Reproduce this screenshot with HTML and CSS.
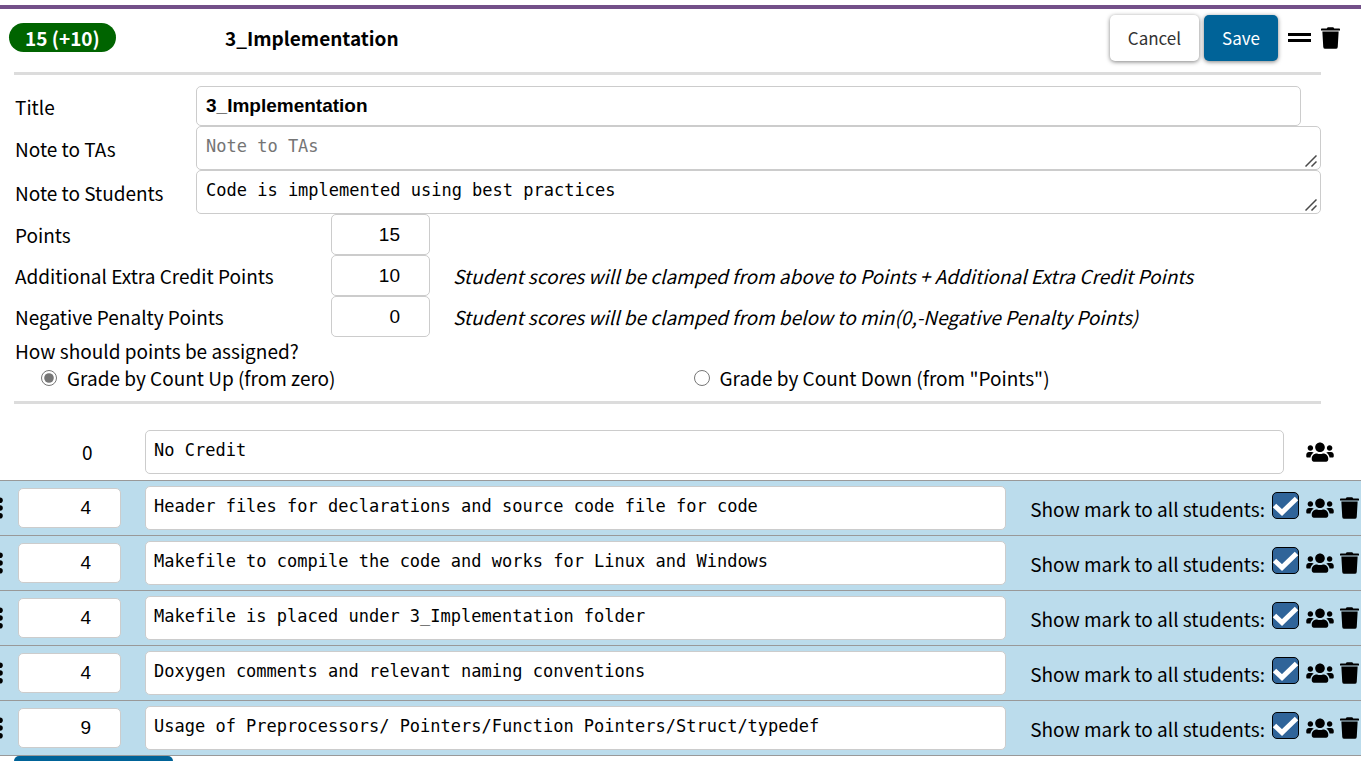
FILE: index.html
```html
<!DOCTYPE html>
<html lang="en">
<head>
<meta charset="utf-8">
<title>3_Implementation</title>
<link rel="stylesheet" href="styles.css">
</head>
<body>
<svg class="sprite" aria-hidden="true">
  <symbol id="trash" viewBox="0 0 448 512"><path d="M432 32H312l-9.400-18.700A24 24 0 0 0 281.100 0H166.800a23.720 23.720 0 0 0-21.400 13.300L136 32H16A16 16 0 0 0 0 48v32h448V48a16 16 0 0 0-16-16zM53.200 467a48 48 0 0 0 47.900 45h245.800a48 48 0 0 0 47.900-45L416 104H32z"/></symbol>
  <symbol id="users" viewBox="0 0 640 512"><path d="M96 224c35.3 0 64-28.7 64-64s-28.7-64-64-64-64 28.7-64 64 28.7 64 64 64zm448 0c35.3 0 64-28.7 64-64s-28.7-64-64-64-64 28.7-64 64 28.7 64 64 64zm32 32h-64c-17.6 0-33.5 7.1-45.1 18.6 40.3 22.1 68.9 62 75.1 109.4h66c17.7 0 32-14.3 32-32v-32c0-35.3-28.7-64-64-64zm-256 0c61.9 0 112-50.1 112-112S381.9 32 320 32 208 82.1 208 144s50.1 112 112 112zm76.8 32h-8.3c-20.8 10-43.9 16-68.5 16s-47.6-6-68.5-16h-8.3C179.6 288 128 339.6 128 403.2V432c0 26.5 21.5 48 48 48h288c26.5 0 48-21.5 48-48v-28.8c0-63.6-51.6-115.2-115.2-115.2zm-223.7-13.4C161.5 263.1 145.6 256 128 256H64c-35.3 0-64 28.7-64 64v32c0 17.7 14.3 32 32 32h65.9c6.3-47.4 34.9-87.3 75.2-109.4z"/></symbol>
  <symbol id="dots" viewBox="0 0 3 22"><circle cx="0" cy="3.2" r="2.8"/><circle cx="0" cy="11" r="2.8"/><circle cx="0" cy="18.8" r="2.8"/></symbol>
  <symbol id="grip" viewBox="0 0 12 12"><path d="M0.5 11.5L11.5 0.5M6.5 11.5L11.5 6.5" fill="none" stroke="#4a4a4a" stroke-width="1.5"/></symbol>
  <symbol id="tick" viewBox="0 0 27 27"><path d="M2.5 13.500L10 20.500L24.500 6.500" fill="none" stroke="#fff" stroke-width="5"/></symbol>
</svg>
<main class="component">
  <header class="head">
    <div class="badge-cell"><span class="badge">15 (+10)</span></div>
    <h1 class="title">3_Implementation</h1>
    <div class="actions">
      <button class="btn" type="button">Cancel</button>
      <button class="btn btn-primary" type="button">Save</button>
      <button class="icon-btn" type="button" aria-label="Reorder"><svg class="lines" viewBox="0 0 23 9"><path d="M0 0h23v3H0zM0 6h23v3H0z"/></svg></button>
      <button class="icon-btn" type="button" aria-label="Delete component"><svg class="trash"><use href="#trash"/></svg></button>
    </div>
  </header>

  <section class="settings">
    <div class="field field-title">
      <label for="title">Title</label>
      <input class="box title-input" id="title" type="text" value="3_Implementation">
    </div>
    <div class="field">
      <label for="note-ta">Note to TAs</label>
      <div class="area"><textarea class="box" id="note-ta" placeholder="Note to TAs"></textarea><svg class="resize"><use href="#grip"/></svg></div>
    </div>
    <div class="field">
      <label for="note-st">Note to Students</label>
      <div class="area"><textarea class="box" id="note-st">Code is implemented using best practices</textarea><svg class="resize"><use href="#grip"/></svg></div>
    </div>
    <div class="points">
      <label for="points">Points</label>
      <input class="box number" id="points" type="number" value="15">
      <span></span>
      <label for="extra">Additional Extra Credit Points</label>
      <input class="box number" id="extra" type="number" value="10">
      <em>Student scores will be clamped from above to Points + Additional Extra Credit Points</em>
      <label for="penalty">Negative Penalty Points</label>
      <input class="box number" id="penalty" type="number" value="0">
      <em>Student scores will be clamped from below to min(0,-Negative Penalty Points)</em>
    </div>
    <fieldset class="assign">
      <legend>How should points be assigned?</legend>
      <div class="choices">
        <label class="choice"><input type="radio" name="count" checked>Grade by Count Up (from zero)</label>
        <label class="choice"><input type="radio" name="count">Grade by Count Down (from "Points")</label>
      </div>
    </fieldset>
  </section>

  <section class="marks">
    <div class="mark mark-none">
      <span class="none-points">0</span>
      <textarea class="box" aria-label="Mark description">No Credit</textarea>
      <button class="icon-btn" type="button" aria-label="View students"><svg class="users"><use href="#users"/></svg></button>
    </div>
    <div class="mark">
      <svg class="dots"><use href="#dots"/></svg>
      <input class="box number" type="number" value="4" aria-label="Points">
      <textarea class="box" aria-label="Mark description">Header files for declarations and source code file for code</textarea>
      <label class="show">Show mark to all students: <span class="check"><input type="checkbox" checked><svg><use href="#tick"/></svg></span></label>
      <button class="icon-btn" type="button" aria-label="View students"><svg class="users"><use href="#users"/></svg></button>
      <button class="icon-btn" type="button" aria-label="Delete mark"><svg class="trash"><use href="#trash"/></svg></button>
    </div>
    <div class="mark">
      <svg class="dots"><use href="#dots"/></svg>
      <input class="box number" type="number" value="4" aria-label="Points">
      <textarea class="box" aria-label="Mark description">Makefile to compile the code and works for Linux and Windows</textarea>
      <label class="show">Show mark to all students: <span class="check"><input type="checkbox" checked><svg><use href="#tick"/></svg></span></label>
      <button class="icon-btn" type="button" aria-label="View students"><svg class="users"><use href="#users"/></svg></button>
      <button class="icon-btn" type="button" aria-label="Delete mark"><svg class="trash"><use href="#trash"/></svg></button>
    </div>
    <div class="mark">
      <svg class="dots"><use href="#dots"/></svg>
      <input class="box number" type="number" value="4" aria-label="Points">
      <textarea class="box" aria-label="Mark description">Makefile is placed under 3_Implementation folder</textarea>
      <label class="show">Show mark to all students: <span class="check"><input type="checkbox" checked><svg><use href="#tick"/></svg></span></label>
      <button class="icon-btn" type="button" aria-label="View students"><svg class="users"><use href="#users"/></svg></button>
      <button class="icon-btn" type="button" aria-label="Delete mark"><svg class="trash"><use href="#trash"/></svg></button>
    </div>
    <div class="mark">
      <svg class="dots"><use href="#dots"/></svg>
      <input class="box number" type="number" value="4" aria-label="Points">
      <textarea class="box" aria-label="Mark description">Doxygen comments and relevant naming conventions</textarea>
      <label class="show">Show mark to all students: <span class="check"><input type="checkbox" checked><svg><use href="#tick"/></svg></span></label>
      <button class="icon-btn" type="button" aria-label="View students"><svg class="users"><use href="#users"/></svg></button>
      <button class="icon-btn" type="button" aria-label="Delete mark"><svg class="trash"><use href="#trash"/></svg></button>
    </div>
    <div class="mark">
      <svg class="dots"><use href="#dots"/></svg>
      <input class="box number" type="number" value="9" aria-label="Points">
      <textarea class="box" aria-label="Mark description">Usage of Preprocessors/ Pointers/Function Pointers/Struct/typedef</textarea>
      <label class="show">Show mark to all students: <span class="check"><input type="checkbox" checked><svg><use href="#tick"/></svg></span></label>
      <button class="icon-btn" type="button" aria-label="View students"><svg class="users"><use href="#users"/></svg></button>
      <button class="icon-btn" type="button" aria-label="Delete mark"><svg class="trash"><use href="#trash"/></svg></button>
    </div>
  </section>
  <button class="add" type="button" aria-label="Add"></button>
</main>
</body>
</html>
```
FILE: styles.css
```css
* { box-sizing: border-box; }
html { height: 100%; overflow: hidden; }
body {
  margin: 0;
  padding-top: 5px;
  height: 100%;
  overflow: hidden;
  background: #fff;
  color: #000;
  font: 19px/27px "Noto Sans CJK SC", "Open Sans", sans-serif;
}
.sprite { position: absolute; width: 0; height: 0; }
.component { border-top: 4px solid #735089; }

.head {
  display: flex;
  align-items: center;
  height: 63px;
  padding: 0 21px 6px 9px;
}
.badge-cell { flex: 0 0 216px; display: flex; }
.badge {
  padding: 1px 16px;
  border-radius: 15px;
  background: #006400;
  color: #fff;
  font-weight: bold;
}
.title { flex: 1; margin: 0; font-size: 19px; font-weight: bold; }
.actions { display: flex; align-items: center; }
.btn {
  height: 46px;
  margin-right: 5px;
  padding: 0 18px;
  border: 0;
  border-radius: 5px;
  background: #fff;
  color: #333;
  font: 17px/27px "Noto Sans CJK SC", "Open Sans", sans-serif;
  box-shadow: 0 1px 4px rgba(0, 0, 0, .5);
}
.btn-primary { margin-right: 10px; background: #006398; color: #fff; }
.icon-btn { display: flex; padding: 0; border: 0; background: none; color: #000; }
.lines { width: 23px; height: 9px; margin-right: 10px; }
.trash { width: 19px; height: 22px; }
.users { width: 28px; height: 22px; }
svg { display: block; fill: currentColor; }

.settings {
  margin: 0 40px 0 14px;
  padding: 11px 0 10px;
  border-top: 3px solid #dcdcdc;
  border-bottom: 3px solid #dcdcdc;
}
.box {
  display: block;
  width: 100%;
  margin: 0;
  border: 1px solid #ccc;
  border-radius: 5px;
  background: #fff;
  color: #000;
  outline: 0;
}
textarea.box {
  height: 44px;
  padding: 8px;
  resize: none;
  overflow: hidden;
  font: 17px/22px "DejaVu Sans Mono", monospace;
}
textarea.box::placeholder { color: #757575; }
.field { display: grid; grid-template-columns: 181px 1fr; align-items: center; padding-left: 1px; }
.field-title { margin-right: 20px; }
.title-input { height: 40px; padding: 0 9px; font: bold 19px/22px "Liberation Sans", Arial, sans-serif; }
.area { position: relative; }
.area textarea.box { padding-left: 9px; }
.resize { position: absolute; right: 4px; bottom: 3px; width: 12px; height: 12px; }
.number {
  height: 41px;
  padding: 0 29px 0 8px;
  text-align: right;
  font: 19px/22px "Liberation Sans", Arial, sans-serif;
  appearance: textfield;
}
.number::-webkit-inner-spin-button { appearance: none; margin: 0; }
.points {
  display: grid;
  grid-template-columns: 316px 99px 1fr;
  align-items: center;
  padding-left: 1px;
}
.points em { padding-left: 23px; white-space: nowrap; }
.assign { margin: 0; padding: 0 1px; border: 0; }
.assign legend { display: block; padding: 0; }
.choices { display: grid; grid-template-columns: 1fr 1fr; }
.choice { display: flex; align-items: center; padding-left: 26px; }
.choice input { width: 16px; height: 16px; margin: 0 10px 0 0; accent-color: #767676; }

.marks { padding-top: 25px; }
.mark {
  display: flex;
  align-items: center;
  height: 55px;
  padding-right: 2px;
  border-bottom: 1px solid #999;
  background: #bbdcec;
}
.mark-none { height: 52px; padding: 0 27px 6px 0; background: #fff; }
.none-points { flex: 0 0 145px; padding-left: 82px; }
.mark textarea { flex: 1; min-width: 0; }
.mark-none .icon-btn { margin-left: 22px; }
.dots { flex: none; width: 3px; height: 22px; margin-right: 15px; }
.mark .number { flex: none; width: 103px; height: 40px; margin-right: 24px; }
.show { display: flex; align-items: center; gap: 7px; margin-left: 24px; margin-right: 7px; white-space: nowrap; }
.mark .trash { margin-left: 6px; }
.check { display: grid; margin-bottom: 5px; }
.check input, .check svg { grid-area: 1 / 1; width: 27px; height: 27px; margin: 0; }
.check input { appearance: none; border: 1px solid #000; border-radius: 5px; background: #2f6499; }
.check svg { pointer-events: none; }
.add {
  display: block;
  width: 159px;
  height: 46px;
  margin-left: 14px;
  border: 0;
  border-radius: 5px;
  background: #006398;
}
```
